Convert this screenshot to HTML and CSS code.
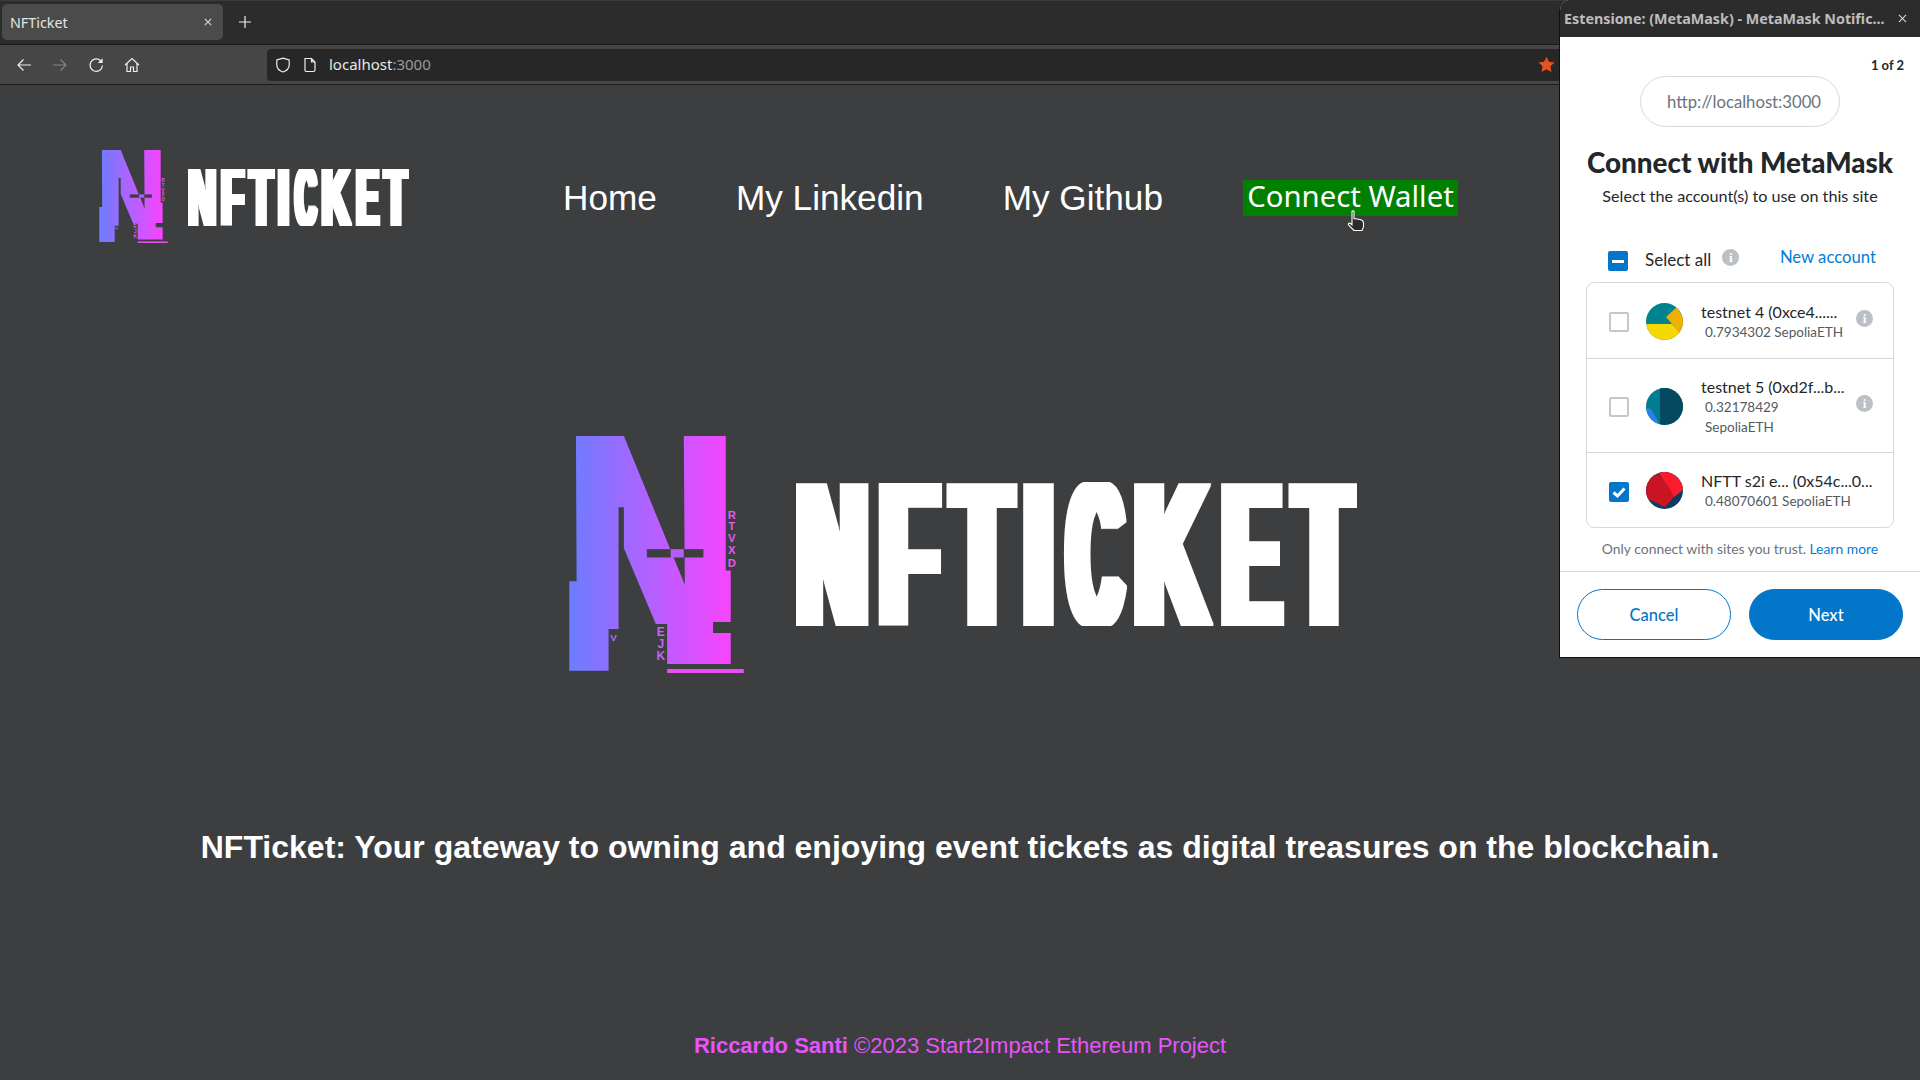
FILE: index.html
```html
<!DOCTYPE html>
<html lang="en">
<head>
<meta charset="utf-8">
<title>NFTicket</title>
<link rel="stylesheet" href="styles.css">
</head>
<body>
<svg class="defs" width="0" height="0" aria-hidden="true">
  <defs>
    <linearGradient id="ngrad" gradientUnits="userSpaceOnUse" x1="58" y1="0" x2="543" y2="0">
      <stop offset="0" stop-color="#6c7dff"/>
      <stop offset="1" stop-color="#f845ff"/>
    </linearGradient>
    <filter id="fat" filterUnits="userSpaceOnUse" x="-10" y="-10" width="590" height="170" primitiveUnits="userSpaceOnUse">
      <feMorphology operator="dilate" radius="7.5 1.3"/>
    </filter>
    <symbol id="nmark" viewBox="58 48 524 712">
      <path fill="url(#ngrad)" d="M78 48H222L405 495L402 48H528V452H543V607H490V640H543V733H352V613H318L222 385V262H206V628H176V753H58V484H80Z"/>
      <rect x="291" y="388" width="72" height="25" fill="#3d3e40"/>
      <rect x="402" y="388" width="59" height="25" fill="#3d3e40"/>
      <rect x="363" y="388" width="39" height="25" fill="#b55cff"/>
      <rect x="352" y="748" width="230" height="12" fill="#e850f5"/>
      <text class="mk r" x="546" y="296">R</text>
      <text class="mk r" x="546" y="331">T</text>
      <text class="mk r" x="546" y="366">V</text>
      <text class="mk r" x="546" y="404">X</text>
      <text class="mk r" x="546" y="441">D</text>
      <text class="mk v" x="191" y="663">V</text>
      <text class="mk e" x="333" y="648">E</text>
      <text class="mk e" x="333" y="685">J</text>
      <text class="mk e" x="333" y="721">K</text>
    </symbol>
    <symbol id="wordmark" viewBox="0 0 561 144">
      <text class="wm" y="142.7" filter="url(#fat)"><tspan x="0" textLength="71" lengthAdjust="spacingAndGlyphs">N</tspan><tspan x="84.5" textLength="57" lengthAdjust="spacingAndGlyphs">F</tspan><tspan x="157.5" textLength="57" lengthAdjust="spacingAndGlyphs">T</tspan><tspan x="228.5" textLength="28" lengthAdjust="spacingAndGlyphs">I</tspan><tspan x="273" textLength="52" lengthAdjust="spacingAndGlyphs">C</tspan><tspan x="339.5" textLength="71" lengthAdjust="spacingAndGlyphs">K</tspan><tspan x="427.5" textLength="56" lengthAdjust="spacingAndGlyphs">E</tspan><tspan x="499.5" textLength="57" lengthAdjust="spacingAndGlyphs">T</tspan></text>
    </symbol>
  </defs>
</svg>

<div class="browser">
  <div class="tabbar">
    <div class="tab">
      <span class="tab-title">NFTicket</span>
      <svg class="ico-x" viewBox="0 0 10 10"><path d="M1 1L9 9M9 1L1 9"/></svg>
    </div>
    <svg class="ico-plus" viewBox="0 0 12 12"><path d="M6 0V12M0 6H12"/></svg>
  </div>
  <div class="toolbar">
    <div class="nav-icons">
      <svg class="tb" viewBox="0 0 16 16"><path d="M15 8H2M7.5 2.5L2 8L7.5 13.5"/></svg>
      <svg class="tb dim" viewBox="0 0 16 16"><path d="M1 8H14M8.5 2.5L14 8L8.5 13.5"/></svg>
      <svg class="tb" viewBox="0 0 16 16"><path d="M13 4.2A6.2 6.2 0 1 0 14.4 8.5"/><path class="fill" d="M14.6 1.2V6H9.8Z"/></svg>
      <svg class="tb" viewBox="0 0 16 16"><path d="M1 8L8 1.5L15 8M3 6.5V14.5H6.5V10H9.5V14.5H13V6.5"/></svg>
    </div>
    <div class="urlbar">
      <svg class="ub" viewBox="0 0 16 16"><path d="M8 1.2L14.2 3V8C14.2 11.5 11 14 8 15C5 14 1.8 11.5 1.8 8V3Z"/></svg>
      <svg class="ub doc" viewBox="0 0 14 16"><path d="M2 1.5H8.5L12 5V13C12 14 11.3 14.5 10.5 14.5H3.5C2.7 14.5 2 14 2 13ZM8.5 1.5V5H12"/></svg>
      <span class="url"><span class="host">localhost</span><span class="port">:3000</span></span>
      <svg class="star" viewBox="0 0 16 16"><path d="M8 .6L10.3 5.3L15.5 6L11.8 9.7L12.6 15L8 12.5L3.4 15L4.2 9.7L.5 6L5.7 5.3Z"/></svg>
    </div>
  </div>
</div>

<main class="page">
  <header class="site-header">
    <a class="brand">
      <svg class="brand-n"><use href="#nmark"/></svg>
      <svg class="brand-w"><use href="#wordmark"/></svg>
    </a>
    <nav class="site-nav">
      <a class="nav-link">Home</a>
      <a class="nav-link">My Linkedin</a>
      <a class="nav-link">My Github</a>
      <button class="connect">Connect Wallet</button>
    </nav>
  </header>
  <section class="hero">
    <svg class="hero-n"><use href="#nmark"/></svg>
    <svg class="hero-w"><use href="#wordmark"/></svg>
  </section>
  <p class="tagline">NFTicket: Your gateway to owning and enjoying event tickets as digital treasures on the blockchain.</p>
  <footer class="site-footer"><b>Riccardo Santi</b> ©2023 Start2Impact Ethereum Project</footer>
</main>

<svg class="cursor" viewBox="0 0 18 22">
  <path d="M5 1.5C5 .5 7 .5 7 1.5V8.5L13 9.5C15 10 16.5 11 16.5 13V17L15 20.5H7L1.5 15C.8 14 2 12.5 3.5 13.5L5 14.8Z" fill="#2a2a2a" stroke="#fff" stroke-width="1.1"/>
</svg>

<aside class="popup">
  <div class="popup-title">
    <span class="popup-title-text">Estensione: (MetaMask) - MetaMask Notific...</span>
    <svg class="popup-x" viewBox="0 0 10 10"><path d="M1 1L9 9M9 1L1 9"/></svg>
  </div>
  <div class="mm">
    <div class="step">1 of 2</div>
    <div class="origin">http://localhost:3000</div>
    <h1 class="mm-h">Connect with MetaMask</h1>
    <p class="mm-sub">Select the account(s) to use on this site</p>
    <div class="select-row">
      <span class="cb cb-on"><span class="dash"></span></span>
      <span class="sel-label">Select all</span>
      <span class="info">i</span>
      <a class="new-acc">New account</a>
    </div>
    <div class="accounts">
      <div class="acc acc1">
        <span class="cb"></span>
        <svg class="avatar" viewBox="0 0 37 37">
          <rect width="37" height="37" fill="#00838f"/>
          <path d="M0 21H26L35 31L37 37H0Z" fill="#f5d800"/>
          <path d="M20 14L31 4L37 14V25L34 30L26 21Z" fill="#f1b000"/>
        </svg>
        <div class="acc-text">
          <div class="acc-name">testnet 4 (0xce4......</div>
          <div class="acc-bal">0.7934302 SepoliaETH</div>
        </div>
        <span class="info">i</span>
      </div>
      <div class="acc acc2">
        <span class="cb"></span>
        <svg class="avatar" viewBox="0 0 37 37">
          <rect width="37" height="37" fill="#007c91"/>
          <rect x="14" width="23" height="37" fill="#04495f"/>
          <path d="M0 20L5 21L14 37H0Z" fill="#2a7fe8"/>
        </svg>
        <div class="acc-text">
          <div class="acc-name">testnet 5 (0xd2f...b...</div>
          <div class="acc-bal">0.32178429<br>SepoliaETH</div>
        </div>
        <span class="info">i</span>
      </div>
      <div class="acc acc3">
        <span class="cb cb-on"><svg viewBox="0 0 20 20"><path class="tick" d="M4.5 10.5L8.5 14L15.5 6.5"/></svg></span>
        <svg class="avatar" viewBox="0 0 37 37">
          <rect width="37" height="37" fill="#0b3d63"/>
          <path d="M12 0H37V18L28 25L24 19Z" fill="#fb1b2f"/>
          <path d="M0 4L12 2L24 17L28 25L19 35L0 26Z" fill="#c91423"/>
        </svg>
        <div class="acc-text">
          <div class="acc-name">NFTT s2i e... (0x54c...0...</div>
          <div class="acc-bal">0.48070601 SepoliaETH</div>
        </div>
      </div>
    </div>
    <p class="trust">Only connect with sites you trust. <a class="learn">Learn more</a></p>
    <div class="mm-actions">
      <button class="btn btn-cancel">Cancel</button>
      <button class="btn btn-next">Next</button>
    </div>
  </div>
</aside>
</body>
</html>
```

FILE: styles.css
```css
* { box-sizing: border-box; }
html, body { margin: 0; height: 100%; overflow: hidden; }
body {
  width: 1920px;
  height: 1080px;
  background: #3d3e40;
  font-family: "Liberation Sans", Arial, sans-serif;
  position: relative;
  display: flex;
  flex-direction: column;
}
.defs { position: absolute; }

/* browser chrome */
.browser { flex: none; font-family: "Noto Sans", sans-serif; }
.tabbar {
  height: 45px;
  background: #2c2c2c;
  border-top: 1px solid #3a3a3a;
  border-bottom: 1px solid #1b1b1b;
  display: flex;
  align-items: center;
  padding: 2px 0 3px 2px;
}
.tab {
  width: 221px;
  height: 36px;
  background: #4b4b4b;
  border-radius: 5px;
  display: flex;
  align-items: center;
  justify-content: space-between;
  padding: 0 11px 0 8px;
}
.tab-title { color: #e4e4e4; font-size: 14.3px; }
.ico-x { width: 8px; height: 8px; fill: none; stroke: #ddd; stroke-width: 1.3; }
.ico-plus { width: 12px; height: 12px; margin-left: 16px; fill: none; stroke: #eee; stroke-width: 1.2; }
.toolbar {
  height: 40px;
  background: #464646;
  border-bottom: 1px solid #1b1b1b;
  display: flex;
  align-items: center;
  padding-left: 16px;
}
.nav-icons { display: flex; gap: 20px; width: 251px; }
.tb { width: 16px; height: 16px; fill: none; stroke: #eee; stroke-width: 1.2; }
.tb.dim { stroke: #858585; }
.tb .fill { fill: #eee; stroke: none; }
.urlbar {
  width: 1293px;
  height: 32px;
  background: #272727;
  border-radius: 4px 0 0 4px;
  display: flex;
  align-items: center;
  padding-left: 8px;
}
.ub { width: 16px; height: 16px; fill: none; stroke: #eee; stroke-width: 1.2; }
.ub.doc { margin-left: 12px; width: 14px; }
.url { margin: -2px 0 0 12px; font-size: 15px; flex: 1; }
.host { color: #e8e8e8; }
.port { color: #9a9a9a; }
.star { width: 17px; height: 17px; fill: #e8501f; margin-right: 5px; }

/* page */
.page { flex: 1; display: flex; flex-direction: column; align-items: center; }
.site-header {
  align-self: flex-start;
  display: flex;
  align-items: center;
  padding: 65px 0 0 99px;
  height: 159px;
}
.brand { display: flex; align-items: center; gap: 20px; width: 310px; margin-right: 154px; }
.brand-n { width: 69px; height: 93px; flex: none; margin-top: -2px; }
.brand-w { width: 221px; height: 57px; flex: none; }
.site-nav { display: flex; align-items: center; gap: 79px; margin-top: 2px; }
.nav-link { color: #fff; font-size: 35.2px; }
.connect {
  border: 0;
  padding: 0 0 4px;
  height: 36px;
  width: 215px;
  margin-left: 1px;
  background: #008000;
  color: #fff;
  font-family: "Noto Sans", sans-serif;
  font-size: 29.3px;
  line-height: 32px;
  white-space: nowrap;
}
.hero { display: flex; align-items: center; gap: 52px; margin-top: 192px; margin-left: 6px; }
.hero-n { width: 175px; height: 237px; flex: none; }
.hero-w { width: 561px; height: 144px; flex: none; margin-top: -1px; }
.tagline { margin: 156px 0 0; color: #fff; font-size: 32px; font-weight: 700; white-space: nowrap; }
.site-footer { margin-top: 167px; color: #e655fa; font-size: 22px; }

.wm { font-family: "Liberation Sans", sans-serif; font-weight: 700; font-size: 205px; fill: #fff; }
.mk { font-family: "Liberation Sans", sans-serif; font-weight: 700; font-size: 36px; text-anchor: middle; }
.mk.r { fill: #e855f8; font-size: 34px; }
.mk.v { fill: #a06cff; font-size: 30px; }
.mk.e { fill: #c860ff; }

.cursor { position: absolute; left: 1347px; top: 210px; width: 18px; height: 22px; }

/* MetaMask popup window */
.popup {
  position: absolute;
  left: 1559px;
  top: 0;
  width: 361px;
  height: 658px;
  background: #fff;
  border-left: 1px solid #111;
  border-bottom: 1px solid #111;
  border-top-left-radius: 10px;
  overflow: hidden;
  font-family: "Lato", "Noto Sans", sans-serif;
  color: #24272a;
}
.popup-title {
  height: 37px;
  background: #2c2c2c;
  display: flex;
  align-items: center;
  justify-content: space-between;
  padding: 0 13px 0 4px;
  font-family: "Noto Sans", sans-serif;
}
.popup-title-text { color: #bdbdbd; font-size: 14.3px; font-weight: 700; white-space: nowrap; }
.popup-x { width: 9px; height: 9px; fill: none; stroke: #cfcfcf; stroke-width: 1.3; }
.mm { display: flex; flex-direction: column; align-items: center; position: relative; }
.step { align-self: flex-end; margin: 20px 16px 0 0; font-size: 13px; font-weight: 700; line-height: 16px; }
.origin {
  margin-top: 3px;
  width: 200px;
  height: 51px;
  border: 1px solid #d6d9dc;
  border-radius: 26px;
  display: flex;
  align-items: center;
  justify-content: flex-end;
  padding-right: 18px;
  font-size: 16.7px;
  color: #6a737d;
}
.mm-h { margin: 20px 0 0; font-size: 27.8px; line-height: 32px; font-weight: 900; }
.mm-sub { margin: 7px 0 0; font-size: 16.2px; line-height: 20px; }
.select-row {
  align-self: stretch;
  display: flex;
  align-items: center;
  margin-top: 40px;
  height: 30px;
  padding-left: 48px;
  position: relative;
  font-size: 17px;
}
.cb {
  flex: none;
  display: block;
  width: 20px;
  height: 20px;
  border: 2px solid #c3c7cb;
  border-radius: 2px;
  background: #fff;
}
.cb-on { background: #0376c9; border-color: #0376c9; position: relative; }
.cb-on svg { display: block; width: 20px; height: 20px; margin: -2px; }
.tick { fill: none; stroke: #fff; stroke-width: 3; }
.dash { display: block; width: 12px; height: 3px; margin: 6.5px 2px; background: #fff; }
.sel-label { margin: -4px 0 0 17px; }
.info {
  flex: none;
  width: 17px;
  height: 17px;
  border-radius: 50%;
  background: #bbc0c5;
  color: #fff;
  font-size: 13px;
  font-weight: 900;
  text-align: center;
  line-height: 17px;
  font-family: "Liberation Serif", serif;
}
.select-row .info { margin: -8px 0 0 11px; }
.new-acc { color: #037dd6; position: absolute; right: 44px; top: 1px; font-size: 16.7px; }
.accounts {
  margin-top: 6px;
  width: 308px;
  height: 246px;
  border: 1px solid #d6d9dc;
  border-radius: 8px;
  display: flex;
  flex-direction: column;
}
.acc { display: flex; align-items: center; padding-left: 22px; position: relative; }
.acc + .acc { border-top: 1px solid #d6d9dc; }
.acc1 { height: 75px; }
.acc2 { height: 94px; }
.acc3 { flex: 1; }
.avatar { flex: none; width: 37px; height: 37px; border-radius: 50%; margin: 1px 0 0 17px; }
.acc-text { margin-left: 18px; margin-top: 1px; }
.acc-name { font-size: 16px; line-height: 21px; white-space: nowrap; }
.acc-bal { font-size: 13.5px; line-height: 20px; color: #535a61; padding-left: 4px; white-space: nowrap; }
.acc .info { position: absolute; right: 20px; top: 27px; }
.acc2 .info { top: 36px; }
.acc .cb { margin-top: 3px; }
.trust { margin: 12px 0 0; font-size: 13.9px; line-height: 18px; color: #6a737d; }
.learn { color: #037dd6; }
.mm-actions {
  align-self: stretch;
  margin-top: 13px;
  border-top: 1px solid #d6d9dc;
  display: flex;
  justify-content: space-between;
  padding: 17px 17px 0;
}
.btn {
  width: 154px;
  height: 51px;
  border-radius: 26px;
  border: 1px solid #0376c9;
  font-family: inherit;
  font-size: 16.5px;
  font-weight: 500;
}
.btn-cancel { background: #fff; color: #0376c9; }
.btn-next { background: #0376c9; color: #fff; }
```
